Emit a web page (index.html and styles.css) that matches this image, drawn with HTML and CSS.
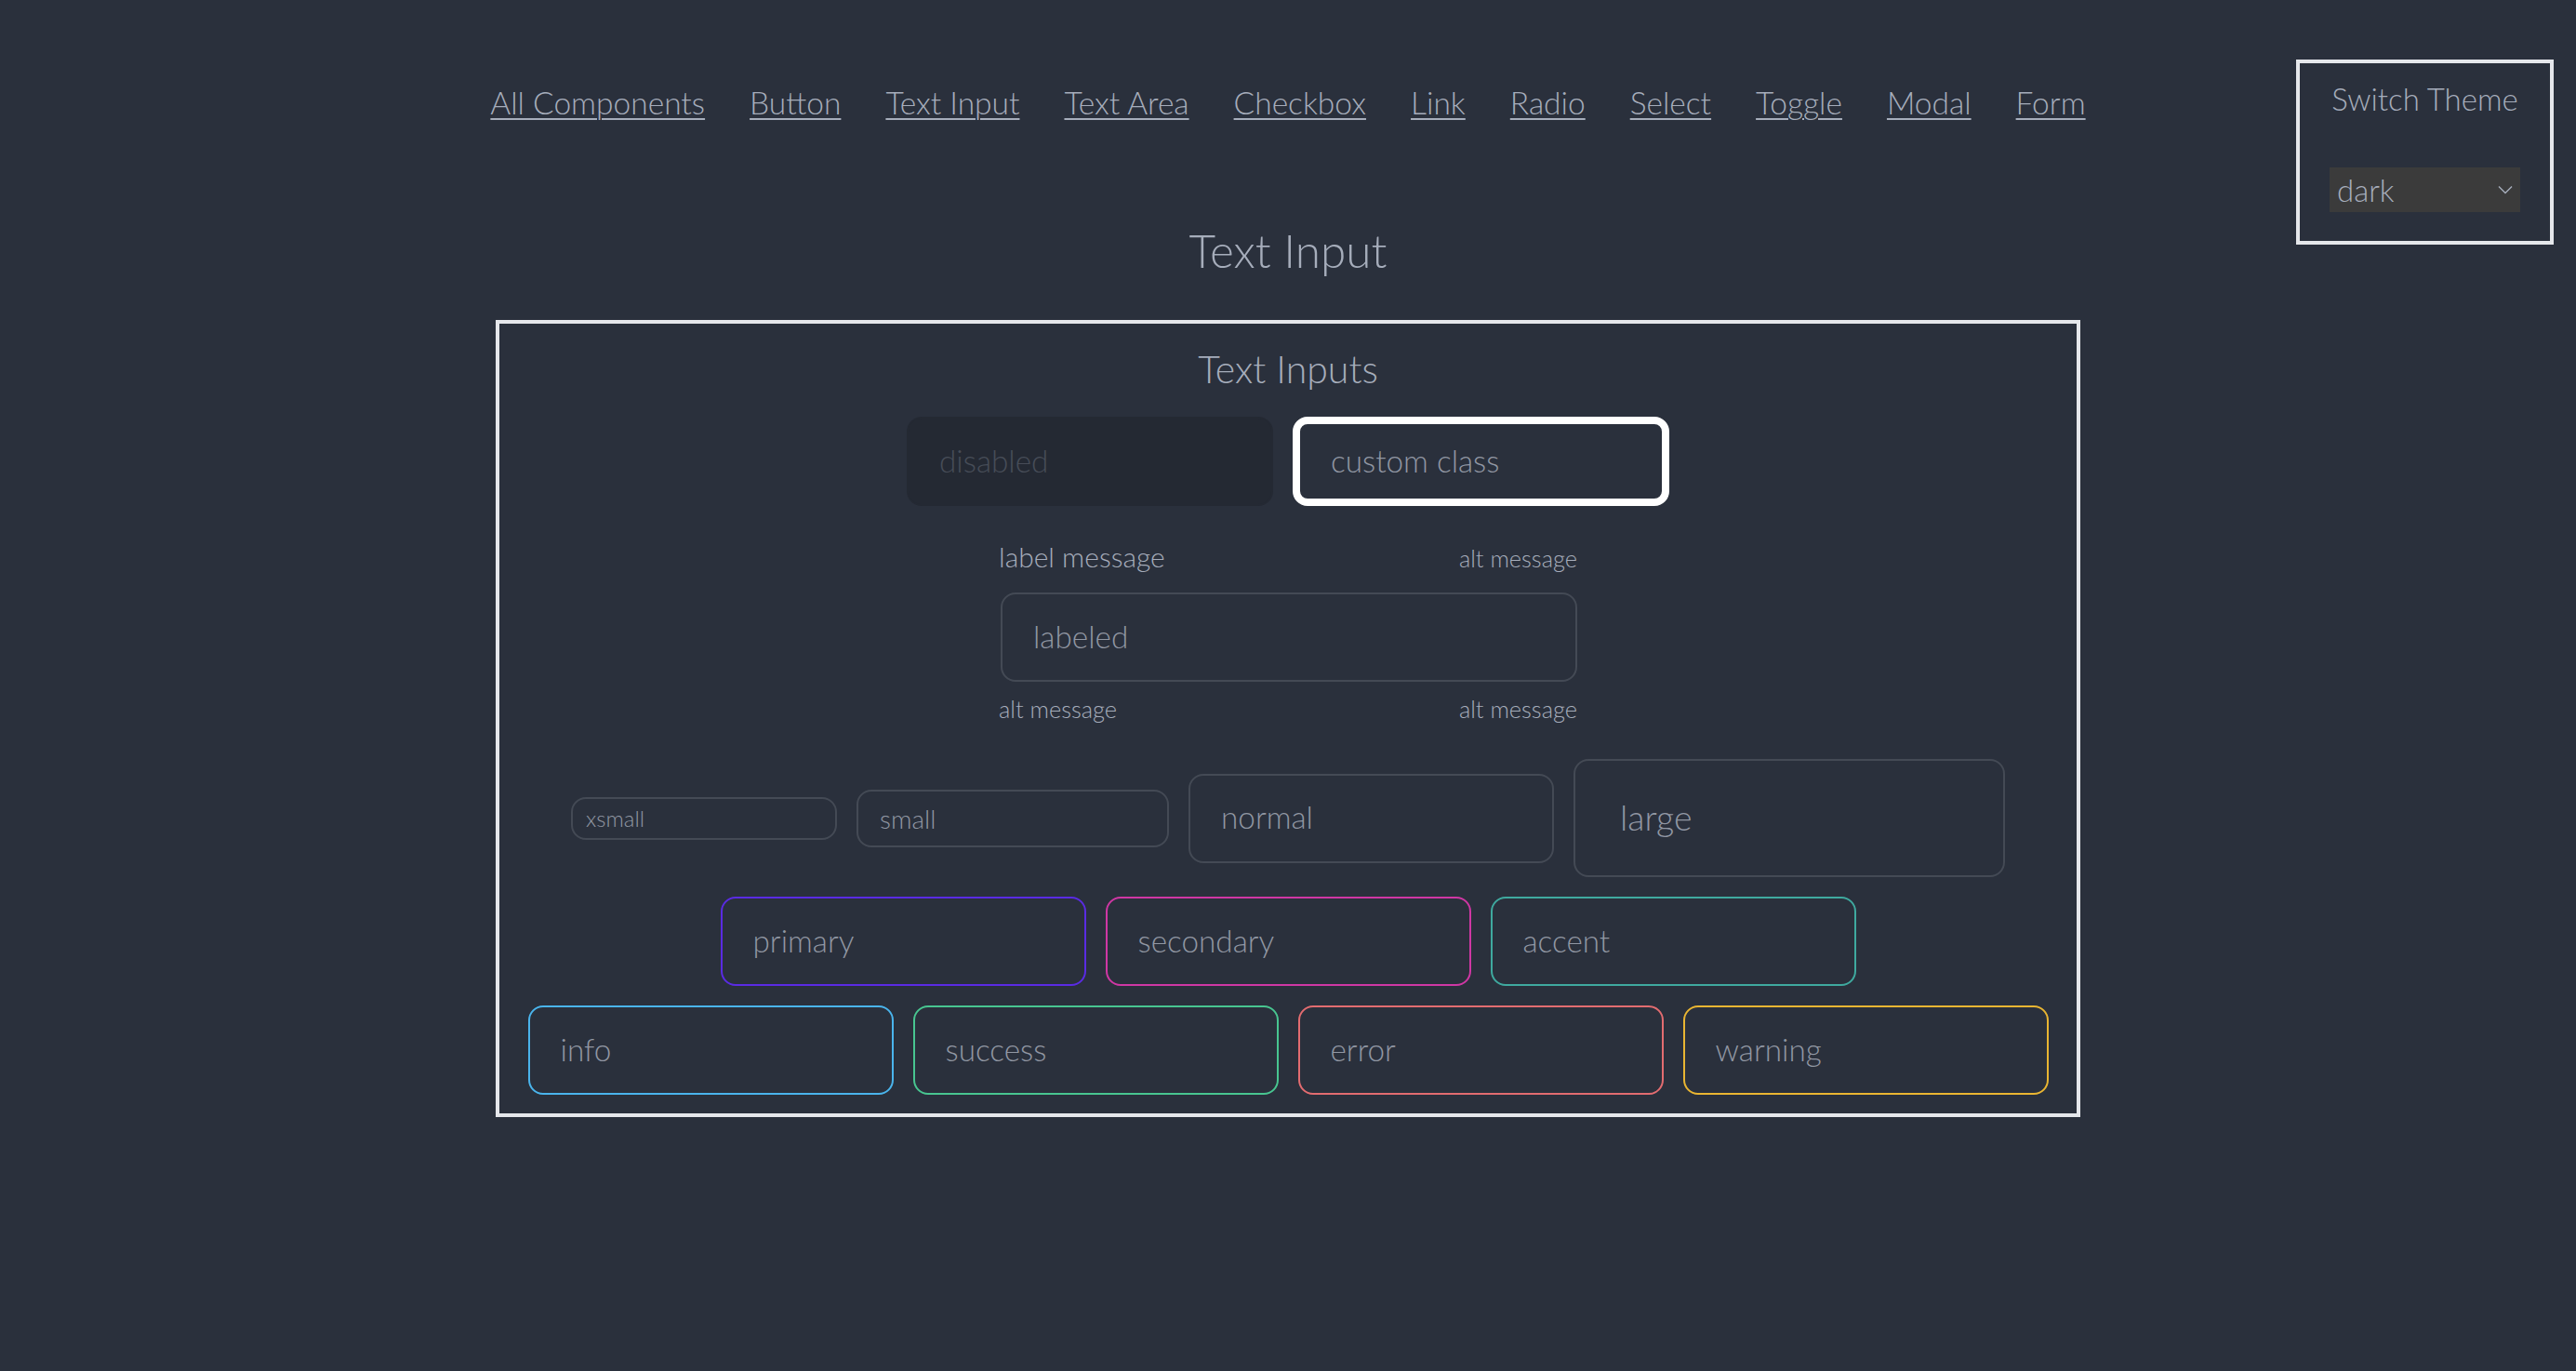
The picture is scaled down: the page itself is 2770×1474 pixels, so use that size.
FILE: index.html
```html
<!DOCTYPE html>
<html lang="en">
<head>
<meta charset="utf-8">
<title>Text Input</title>
<link rel="stylesheet" href="styles.css">
</head>
<body>
<header class="nav">
  <a class="nav-link" href="#">All Components</a>
  <a class="nav-link" href="#">Button</a>
  <a class="nav-link" href="#">Text Input</a>
  <a class="nav-link" href="#">Text Area</a>
  <a class="nav-link" href="#">Checkbox</a>
  <a class="nav-link" href="#">Link</a>
  <a class="nav-link" href="#">Radio</a>
  <a class="nav-link" href="#">Select</a>
  <a class="nav-link" href="#">Toggle</a>
  <a class="nav-link" href="#">Modal</a>
  <a class="nav-link" href="#">Form</a>
</header>

<aside class="theme-box">
  <div class="theme-label">Switch Theme</div>
  <div class="theme-select">
    <span>dark</span>
    <svg class="chev" width="16" height="10" viewBox="0 0 16 10"><path d="M1 1.5 L8 8.5 L15 1.5" fill="none" stroke="#a6adbb" stroke-width="1.4"/></svg>
  </div>
</aside>

<main class="page">
  <h1 class="page-title">Text Input</h1>
  <section class="panel">
    <h2 class="panel-title">Text Inputs</h2>

    <div class="row row-first">
      <div class="input input-disabled"><span class="ph">disabled</span></div>
      <div class="input input-custom"><span class="ph">custom class</span></div>
    </div>

    <div class="form-control">
      <div class="label-row">
        <span class="label-text">label message</span>
        <span class="label-alt">alt message</span>
      </div>
      <div class="input input-labeled"><span class="ph">labeled</span></div>
      <div class="label-row label-row-bottom">
        <span class="label-alt">alt message</span>
        <span class="label-alt">alt message</span>
      </div>
    </div>

    <div class="row row-sizes">
      <div class="input input-xs"><span class="ph">xsmall</span></div>
      <div class="input input-sm"><span class="ph">small</span></div>
      <div class="input input-md"><span class="ph">normal</span></div>
      <div class="input input-lg"><span class="ph">large</span></div>
    </div>

    <div class="row row-colors">
      <div class="input input-md c-primary"><span class="ph">primary</span></div>
      <div class="input input-md c-secondary"><span class="ph">secondary</span></div>
      <div class="input input-md c-accent"><span class="ph">accent</span></div>
    </div>

    <div class="row row-colors">
      <div class="input input-md c-info"><span class="ph">info</span></div>
      <div class="input input-md c-success"><span class="ph">success</span></div>
      <div class="input input-md c-error"><span class="ph">error</span></div>
      <div class="input input-md c-warning"><span class="ph">warning</span></div>
    </div>
  </section>
</main>
</body>
</html>
```

FILE: styles.css
```css
* { box-sizing: border-box; }

html, body {
  margin: 0;
  padding: 0;
}

body {
  background: #2a303c;
  color: #a6adbb;
  font-family: "Lato", "Open Sans", sans-serif;
  font-weight: 300;
  min-height: 1474px;
  position: relative;
}

.nav {
  display: flex;
  justify-content: center;
  gap: 48px;
  padding-top: 86px;
}

.nav-link {
  color: #a6adbb;
  font-size: 33.5px;
  line-height: 48px;
  text-decoration: underline;
  text-underline-offset: 4px;
  text-decoration-thickness: 2px;
}

.theme-box {
  position: absolute;
  top: 64px;
  right: 24px;
  width: 277px;
  height: 199px;
  border: 4px solid #e5e7eb;
  display: flex;
  flex-direction: column;
  align-items: center;
  padding-top: 14px;
}

.theme-label {
  font-size: 33px;
  line-height: 48px;
  color: #a6adbb;
}

.theme-select {
  margin-top: 50px;
  width: 205px;
  height: 48px;
  background: #3b3b3b;
  display: flex;
  align-items: center;
  justify-content: space-between;
  padding: 0 8px 0 8px;
  font-size: 33px;
  color: #a6adbb;
}

.chev { display: block; }

.page {
  display: flex;
  flex-direction: column;
  align-items: center;
}

.page-title {
  margin: 106px 0 0;
  font-size: 49.5px;
  line-height: 58px;
  font-weight: 300;
  color: #a6adbb;
}

.panel {
  margin-top: 46px;
  width: 1704px;
  border: 4px solid #e5e7eb;
  padding: 24px 30px 20px;
  display: flex;
  flex-direction: column;
  align-items: center;
}

.panel-title {
  margin: 0;
  font-size: 41px;
  line-height: 50px;
  font-weight: 300;
  color: #a6adbb;
}

.row {
  display: flex;
  justify-content: center;
  align-items: center;
  gap: 21px;
}

.row-first { margin-top: 26px; }
.row-sizes { margin-top: 36px; }
.row-colors { margin-top: 21px; }

.input {
  height: 96px;
  width: 393px;
  border: 2px solid #444a55;
  border-radius: 16px;
  background: #2a303c;
  display: flex;
  align-items: center;
  padding-left: 33px;
  padding-bottom: 3px;
  font-size: 33.3px;
  color: #9197a3;
}

.ph { white-space: nowrap; }

.input-disabled {
  width: 394px;
  background: #242933;
  border-color: #242933;
  color: #474d58;
}

.input-custom {
  width: 405px;
  border: 8px solid #ffffff;
  padding-left: 33px;
}

.form-control {
  margin-top: 36px;
  width: 622px;
  display: flex;
  flex-direction: column;
}

.label-row {
  display: flex;
  justify-content: space-between;
  align-items: baseline;
  height: 36px;
  line-height: 36px;
}

.label-row-bottom { margin-top: 11px; }

.label-text {
  font-size: 30px;
  color: #a6adbb;
}

.label-alt {
  font-size: 25.4px;
  color: #a6adbb;
}

.input-labeled {
  width: 620px;
  margin: 21px 0 0 2px;
}

.input-xs {
  width: 286px;
  height: 46px;
  padding-left: 14px;
  padding-bottom: 0;
  font-size: 24px;
}

.input-sm {
  width: 336px;
  height: 62px;
  padding-left: 23px;
  padding-bottom: 0;
  font-size: 28px;
}

.input-md { width: 393px; height: 96px; }

.input-lg {
  width: 464px;
  height: 127px;
  padding-left: 48px;
  font-size: 37.5px;
}

.c-primary { border-color: #5a2be3; }
.c-secondary { border-color: #cf37a4; }
.c-accent { border-color: #3fa99f; }
.c-info { border-color: #4ab4ec; }
.c-success { border-color: #48c590; }
.c-error { border-color: #e26c70; }
.c-warning { border-color: #e9b532; }
```
